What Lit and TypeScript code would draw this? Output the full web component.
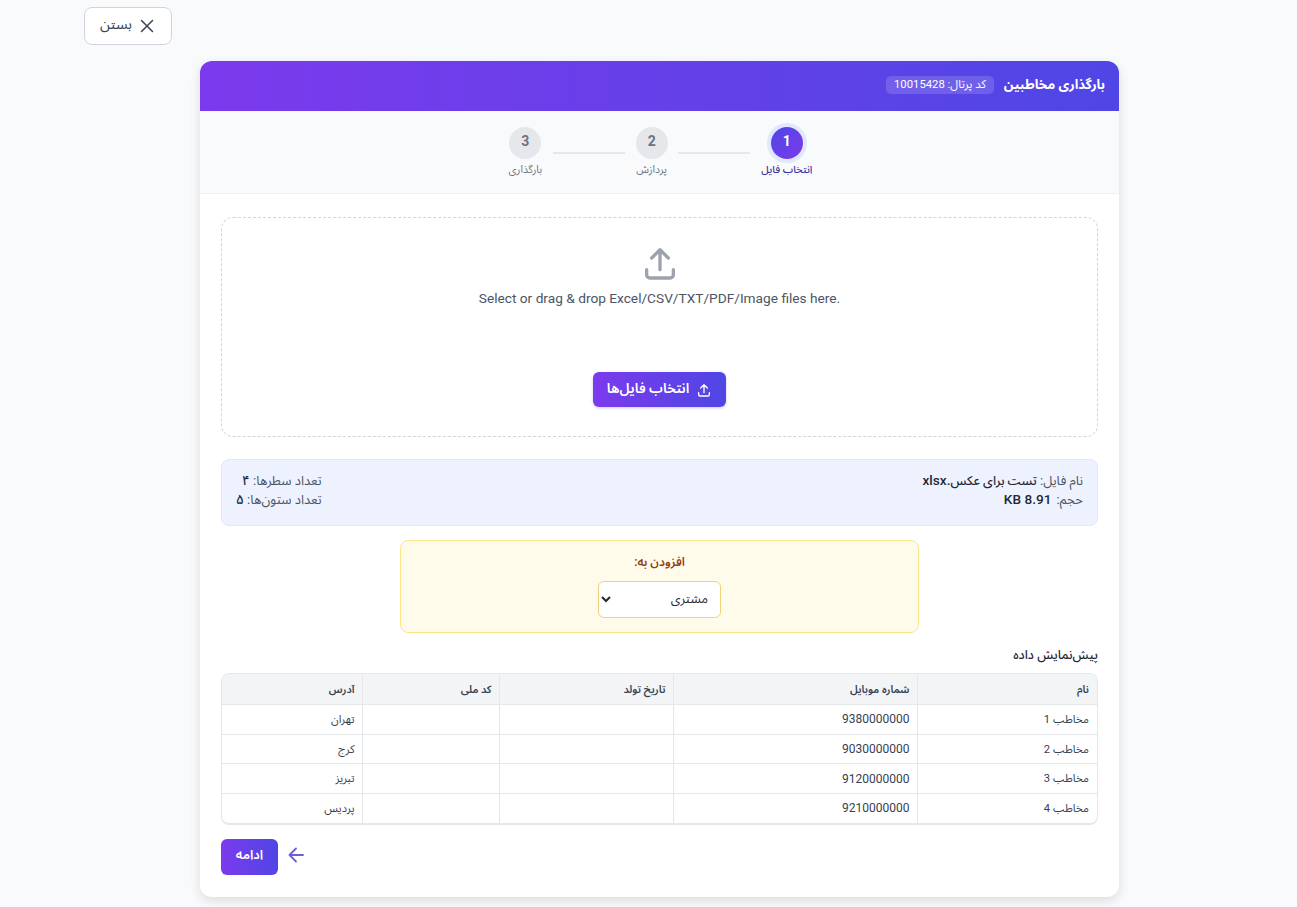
import { LitElement, html, css, svg } from "lit";
import { customElement } from "lit/decorators.js";

const rows = [
  ["مخاطب 1", "9380000000", "", "", "تهران"],
  ["مخاطب 2", "9030000000", "", "", "کرج"],
  ["مخاطب 3", "9120000000", "", "", "تبریز"],
  ["مخاطب 4", "9210000000", "", "", "پردیس"],
];
const heads = ["نام", "شماره موبایل", "تاریخ تولد", "کد ملی", "آدرس"];

@customElement("app-root")
export class AppRoot extends LitElement {
  static styles = css`
    :host {
      display: block;
      height: 907px;
      overflow: hidden;
      background: #f9fafc;
      font-family: Roboto, "Noto Sans Arabic", "Noto Sans", sans-serif;
      color: #1f2937;
    }
    .page { display: flex; flex-direction: column; align-items: flex-start; padding: 7px 0 0 84px; }
    .close {
      direction: rtl; display: flex; align-items: center; gap: 6px; height: 38px; width: 88px; box-sizing: border-box;
      justify-content: center; background: #fff; border: 1px solid #d1d5db; border-radius: 8px; font-size: 14.4px; color: #374151;
      font-family: inherit; padding: 0 0 3px;
    }
    .close svg { width: 18px; height: 18px; margin-top: 3px; }
    .card {
      direction: rtl; margin: 16px 0 0 116px; width: 919px; height: 836px; background: #fff; border-radius: 12px;
      box-shadow: 0 4px 12px rgba(0,0,0,.12); overflow: hidden; display: flex; flex-direction: column;
    }
    .head {
      height: 50px; flex: none; box-sizing: border-box; display: flex; align-items: center; gap: 10px; padding: 0 14px 2px; color: #fff;
      background: linear-gradient(to left, #4f46e5, #7c3aed);
    }
    .title { font-size: 13.2px; font-weight: 700; }
    .badge { font-size: 11.3px; background: rgba(255,255,255,.15); border-radius: 5px; padding: 0 8px; height: 18px; line-height: 18px; }
    .steps {
      height: 83px; flex: none; box-sizing: border-box; background: #f9fafb; border-bottom: 1px solid #f0f1f4; display: flex;
      justify-content: center; align-items: flex-start; gap: 10.75px; padding: 16px 0 0 2px;
    }
    .step { display: flex; flex-direction: column; align-items: center; gap: 4px; font-size: 10.5px; line-height: 14px; color: #6b7280; }
    .dot { width: 32px; height: 32px; box-sizing: border-box; padding-bottom: 4px; border-radius: 50%; background: #e5e7eb; color: #6b7280; font-weight: 700; font-size: 14px;
      display: flex; align-items: center; justify-content: center; }
    .step.on { color: #3730a3; font-weight: 500; font-size: 10.4px; }
    .step.on .dot { font-size: 14px; background: linear-gradient(135deg, #4f46e5, #7c3aed); color: #fff; box-shadow: 0 0 0 4px #e0e7ff; }
    .line { width: 72px; height: 2px; background: #e5e7eb; margin-top: 25px; }
    .body { padding: 23px 21px 0 21px; display: flex; flex-direction: column; }
    .drop {
      height: 220px; box-sizing: border-box; border: 1px dashed #d1d5db; border-radius: 12px; display: flex; flex-direction: column;
      align-items: center; padding-top: 25px;
    }
    .drop svg.big { width: 40px; height: 40px; color: #9ca3af; }
    .drop p { margin: 5px 0 0; font-size: 13.7px; line-height: 20px; color: #4b5563; direction: ltr; }
    .pick {
      margin-top: 64px; height: 35px; width: 133px; box-sizing: border-box; display: flex; align-items: center; justify-content: center; gap: 7px;
      border: 0; border-radius: 6px; color: #fff; font-family: inherit; font-size: 13.8px; font-weight: 600; padding: 0;
      background: linear-gradient(to left, #4f46e5, #7c3aed); box-shadow: 0 1px 3px rgba(79,70,229,.3);
    }
    .pick svg { width: 16px; height: 16px; }
    .pick span { padding-bottom: 3px; }
    .info {
      margin-top: 22px; height: 67px; box-sizing: border-box; background: #eef2ff; border: 1px solid #e0e7ff; border-radius: 8px;
      display: flex; justify-content: space-between; align-items: center; padding: 0 14px 6px; font-size: 13px; line-height: 18px; color: #4b5563;
    }
    .info b { color: #1f2937; font-weight: 500; font-size: 13.6px; }
    .info b .ar { font-size: 12.6px; }
    .info b.sz { margin-right: 2px; }
    .add {
      margin: 14px auto 0; width: 519px; height: 93px; box-sizing: border-box; background: #fffbeb; border: 1px solid #fde68a; border-radius: 8px;
      display: flex; flex-direction: column; align-items: center; padding-top: 12px; gap: 10px;
    }
    .add label { font-size: 12px; line-height: 18px; font-weight: 600; color: #92400e; }
    .add select {
      width: 123px; height: 37px; box-sizing: border-box; border: 1px solid #f0d27a; border-radius: 6px; background: #fff; padding: 0 8px 2px;
      font-family: inherit; font-size: 12.8px; color: #1f2937;
    }
    h3 { margin: 13px 0 0; font-size: 12.6px; line-height: 18px; font-weight: 500; color: #1f2937; }
    .wrap { margin-top: 9px; border: 1px solid #e5e7eb; border-bottom-width: 2px; border-radius: 8px; overflow: hidden; }
    table { width: 100%; border-collapse: collapse; table-layout: fixed; font-size: 11.2px; }
    th, td { text-align: right; padding: 0 7px; border-left: 1px solid #e5e7eb; border-top: 1px solid #e5e7eb; }
    th:first-child, td:first-child { padding-right: 8px; }
    th:last-child, td:last-child { border-left: 0; }
    th { height: 30px; background: #f3f4f6; font-weight: 600; font-size: 10.6px; color: #374151; border-top: 0; }
    td { height: 28.7px; color: #374151; }
    td:nth-child(2) { font-size: 12px; }
    .c1 { width: 180px; } .c2 { width: 244px; } .c3 { width: 174px; } .c4 { width: 137px; }
    .foot { display: flex; justify-content: flex-end; align-items: center; gap: 9px; margin-top: 14px; }
    .foot svg { width: 18px; height: 18px; color: #6a60d4; margin-bottom: 4px; }
    .next {
      width: 57px; height: 36px; border: 0; border-radius: 6px; color: #fff; font-family: inherit; font-size: 13px; font-weight: 600; padding: 0 0 3px;
      background: linear-gradient(to left, #4f46e5, #7c3aed);
    }
  `;

  render() {
    const up = svg`<path d="M12 16V4M7 9l5-5 5 5M4 16v3a2 2 0 0 0 2 2h12a2 2 0 0 0 2-2v-3" fill="none" stroke="currentColor" stroke-width="2" stroke-linecap="round" stroke-linejoin="round"/>`;
    return html`<div class="page">
      <button class="close">
        <svg viewBox="0 0 18 18"><path d="M3.5 3.5l11 11M14.5 3.5l-11 11" stroke="#374151" stroke-width="1.5" stroke-linecap="round"/></svg>
        <span>بستن</span>
      </button>
      <div class="card">
        <div class="head">
          <span class="title">بارگذاری مخاطبین</span>
          <span class="badge">کد پرتال: 10015428</span>
        </div>
        <div class="steps">
          <div class="step on"><span class="dot">1</span><span>انتخاب فایل</span></div>
          <div class="line"></div>
          <div class="step"><span class="dot">2</span><span>پردازش</span></div>
          <div class="line"></div>
          <div class="step"><span class="dot">3</span><span>بارگذاری</span></div>
        </div>
        <div class="body">
          <div class="drop">
            <svg class="big" viewBox="0 0 24 24">${up}</svg>
            <p>Select or drag &amp; drop Excel/CSV/TXT/PDF/Image files here.</p>
            <button class="pick"><svg viewBox="0 0 24 24">${up}</svg><span>انتخاب فایل‌ها</span></button>
          </div>
          <div class="info">
            <div><div>نام فایل: <b><span class="ar">تست برای عکس</span>.xlsx</b></div><div>حجم: <b class="sz">8.91 KB</b></div></div>
            <div><div>تعداد سطرها: <b>۴</b></div><div>تعداد ستون‌ها: <b>۵</b></div></div>
          </div>
          <div class="add">
            <label>افزودن به:</label>
            <select><option>مشتری</option></select>
          </div>
          <h3>پیش‌نمایش داده</h3>
          <div class="wrap">
            <table>
              <colgroup><col class="c1"/><col class="c2"/><col class="c3"/><col class="c4"/><col/></colgroup>
              <thead><tr>${heads.map((h) => html`<th>${h}</th>`)}</tr></thead>
              <tbody>${rows.map((r) => html`<tr>${r.map((c) => html`<td>${c}</td>`)}</tr>`)}</tbody>
            </table>
          </div>
          <div class="foot">
            <svg viewBox="0 0 18 18"><path d="M16 9H2.5M9 2.5L2.5 9 9 15.5" fill="none" stroke="currentColor" stroke-width="1.8" stroke-linecap="round" stroke-linejoin="round"/></svg>
            <button class="next">ادامه</button>
          </div>
        </div>
      </div>
    </div>`;
  }
}
